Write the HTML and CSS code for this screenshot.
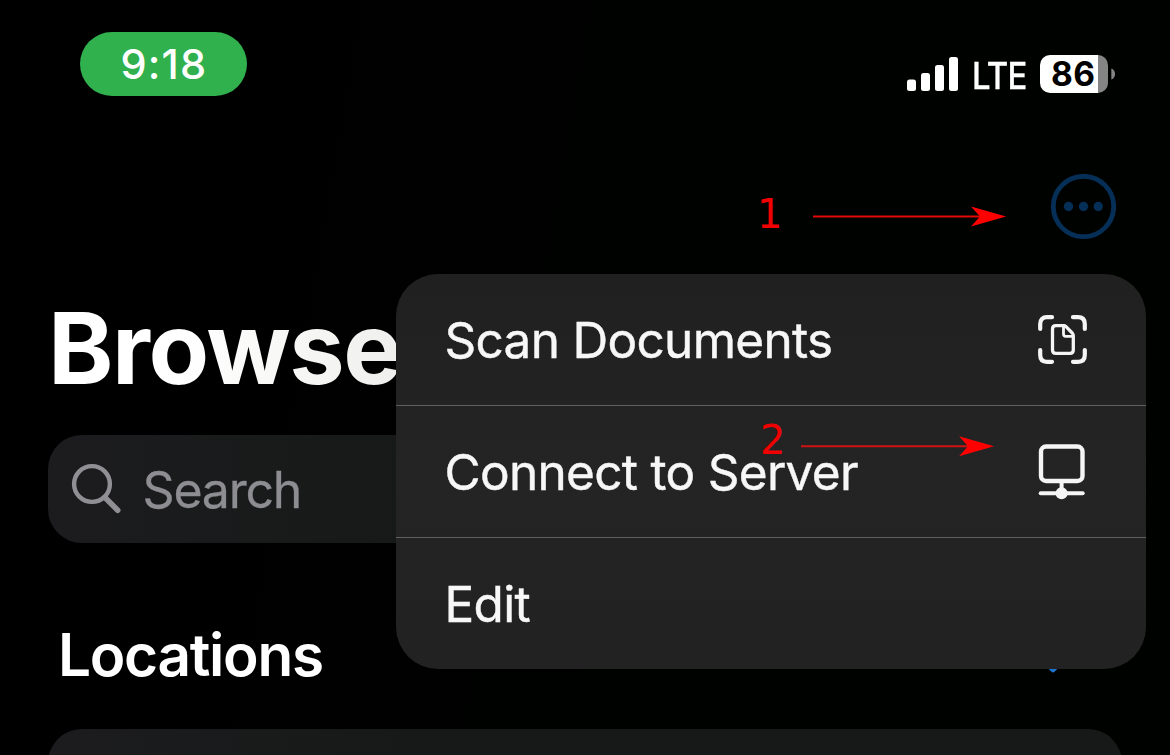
FILE: index.html
```html
<!DOCTYPE html>
<html lang="en">
<head>
<meta charset="utf-8">
<title>Browse</title>
<link rel="stylesheet" href="styles.css">
</head>
<body>
<div class="screen">
  <header class="status">
    <div class="time"><span>9:18</span></div>
    <div class="indicators">
      <svg class="signal" width="52" height="36" viewBox="0 0 52 36" fill="#fff"><rect x="0" y="23.500" width="9" height="11.500" rx="2.500"/><rect x="14" y="17" width="9" height="18" rx="2.500"/><rect x="28" y="9" width="9" height="26" rx="2.500"/><rect x="42" y="1" width="9" height="34" rx="2.500"/></svg>
      <span class="network">LTE</span>
      <div class="battery"><span>86</span></div>
      <svg class="cap" width="5" height="12" viewBox="0 0 5 12"><path d="M0.300 0.500C5.300 2 5.300 10 0.300 11.500Z" fill="#858585"/></svg>
    </div>
  </header>
  <nav class="toolbar">
    <svg width="66" height="66" viewBox="0 0 66 66"><circle cx="33.500" cy="32.500" r="30.200" fill="none" stroke="#052f57" stroke-width="4.800"/><g fill="#052f57"><circle cx="18.500" cy="32.500" r="4.700"/><circle cx="33.500" cy="32.500" r="4.700"/><circle cx="48.300" cy="32.500" r="4.700"/></g></svg>
  </nav>
  <h1 class="title">Browse</h1>
  <div class="search">
    <svg width="52" height="52" viewBox="0 0 52 52" fill="none" stroke="#8f8f94"><circle cx="21" cy="21" r="17.900" stroke-width="4.400"/><path d="M34 34.500L46.700 47.200" stroke-width="5.600" stroke-linecap="round"/></svg>
    <span>Search</span>
  </div>
  <div class="section">
    <h2>Locations</h2>
    <svg width="34" height="20" viewBox="0 0 34 20" fill="none" stroke="#1c76d2" stroke-width="5" stroke-linecap="round" stroke-linejoin="round"><path d="M3 1L17 14.800L31 1"/></svg>
  </div>
  <div class="list"></div>

  <div class="menu">
    <div class="item"><span>Scan Documents</span>
      <svg width="50" height="50" viewBox="0 0 50 50" fill="none" stroke="#f5f5f5" stroke-linecap="round" stroke-linejoin="round"><path d="M2.200 14V9Q2.200 2.200 9 2.200H14M35 2.200H40Q46.800 2.200 46.800 9V14M2.200 35V40Q2.200 46.800 9 46.800H14M35 46.800H40Q46.800 46.800 46.800 40V35" stroke-width="4.200"/><path d="M17.800 10.600H25.500Q27 10.600 28 11.600L34.200 18Q35.300 19.200 35.300 20.500V35Q35.300 38.300 32 38.300H17.800Q14.500 38.300 14.500 35V13.900Q14.500 10.600 17.800 10.600Z" stroke-width="3.300"/><path d="M25.500 11.500V19Q25.500 21.300 27.800 21.300H34.500" stroke-width="2.800"/></svg>
    </div>
    <div class="item"><span>Connect to Server</span>
      <svg width="50" height="56" viewBox="0 0 50 56" fill="none" stroke="#f5f5f5"><rect x="3" y="2.500" width="41.500" height="34.500" rx="5" stroke-width="4.400"/><path d="M23.600 37V49" stroke-width="4"/><path d="M2.700 49.200H44.700" stroke-width="4" stroke-linecap="round"/><circle cx="23.600" cy="49.200" r="6" fill="#f5f5f5" stroke="none"/></svg>
    </div>
    <div class="item"><span>Edit</span></div>
  </div>

  <div class="note note-one"><span>1</span><svg width="194" height="22" viewBox="0 0 194 22"><path d="M0 10.500H172" stroke="#e00808" stroke-width="2"/><path d="M158 0.500L193 10.500L158 20.500L167 10.500Z" fill="#f00"/></svg></div>
  <div class="note note-two"><span>2</span><svg width="194" height="22" viewBox="0 0 194 22"><path d="M0 10.300H172" stroke="#d01212" stroke-width="2"/><path d="M158 0.300L193 10.300L158 20.300L167 10.300Z" fill="#f00"/></svg></div>
</div>
</body>
</html>
```

FILE: styles.css
```css
* { box-sizing: border-box; }
body { margin: 0; background: #000; }
svg { display: block; flex: none; }
.screen {
  position: relative;
  width: 1170px;
  height: 755px;
  overflow: hidden;
  background: linear-gradient(100deg, #000 25%, #000200 55%);
  color: #fff;
  font-family: Inter, "Liberation Sans", sans-serif;
  white-space: nowrap;
}
.status { display: flex; justify-content: space-between; height: 96px; padding: 32px 54px 0 80px; }
.time {
  width: 167px;
  height: 64px;
  border-radius: 32px;
  background: #30b14e;
  font-size: 41.5px;
  font-weight: 500;
  line-height: 64px;
  padding-left: 40.5px;
  letter-spacing: 1.2px;
}
.indicators { display: flex; align-items: center; height: 40px; margin-top: 22px; }
.signal { margin-right: 13px; }
.network { width: 68px; font-size: 36.5px; font-weight: 500; line-height: 44px; letter-spacing: -0.8px; padding-top: 3px; transform: scaleX(0.9); transform-origin: left; -webkit-text-stroke: 0.3px #fff; }
.battery {
  width: 68px;
  height: 38px;
  border-radius: 10px;
  background: linear-gradient(90deg, #fff 58px, #858585 58px);
  color: #000;
  font-size: 33.5px;
  font-weight: 700;
  line-height: 38px;
  padding-left: 11px;
  letter-spacing: 0.5px;
}
.cap { margin-left: 3px; }
.toolbar { display: flex; justify-content: flex-end; padding: 78px 54px 0 0; height: 204px; }
.title {
  margin: 0;
  padding-left: 48px;
  height: 135px;
  font-size: 99px;
  font-weight: 700;
  line-height: 96px;
  letter-spacing: -1.4px;
  background: linear-gradient(90deg, #fff 180px, #efefed 400px);
  background-clip: text;
  -webkit-background-clip: text;
  color: transparent;
}
.search {
  display: flex;
  align-items: center;
  height: 108px;
  margin: 0 48px;
  padding-left: 23px;
  border-radius: 34px;
  background: linear-gradient(90deg, #1c1c1e, #171918 360px);
  color: #8d8d92;
  font-size: 50px;
  letter-spacing: -1.2px;
  -webkit-text-stroke: 0.3px #8d8d92;
}
.search svg { margin-right: 19.5px; }
.search span { padding-top: 2px; }
.section { display: flex; justify-content: space-between; height: 186px; padding: 112px 100px 0 58px; }
.section h2 { margin: 0; font-size: 58.5px; font-weight: 600; line-height: 0; letter-spacing: -1.3px; }
.list { height: 80px; margin: 0 48px; border-radius: 34px; background: linear-gradient(90deg, #1c1c1e, #171918 360px); }
.menu {
  position: absolute;
  left: 396px;
  top: 274px;
  width: 750px;
  height: 395px;
  overflow: hidden;
  border-radius: 42px;
  background: linear-gradient(#202020, #242424 50%, #222);
  color: #f7f7f7;
  font-size: 49.5px;
  letter-spacing: -0.7px;
  -webkit-text-stroke: 0.4px #f7f7f7;
}
.item { display: flex; align-items: center; justify-content: space-between; height: 131px; padding: 0 58px 0 48.5px; }
.item + .item { height: 132px; border-top: 1px solid #606060; }
.note { position: absolute; display: flex; align-items: center; color: #f00000; font: 40px/40px "DejaVu Sans", sans-serif; }
.note svg { margin-top: 5px; }
.note-one { left: 757px; top: 194px; }
.note-one span { width: 56px; }
.note-two { left: 760px; top: 420px; }
.note-two span { width: 41px; }
.note-two svg { margin-top: 13px; }
```
